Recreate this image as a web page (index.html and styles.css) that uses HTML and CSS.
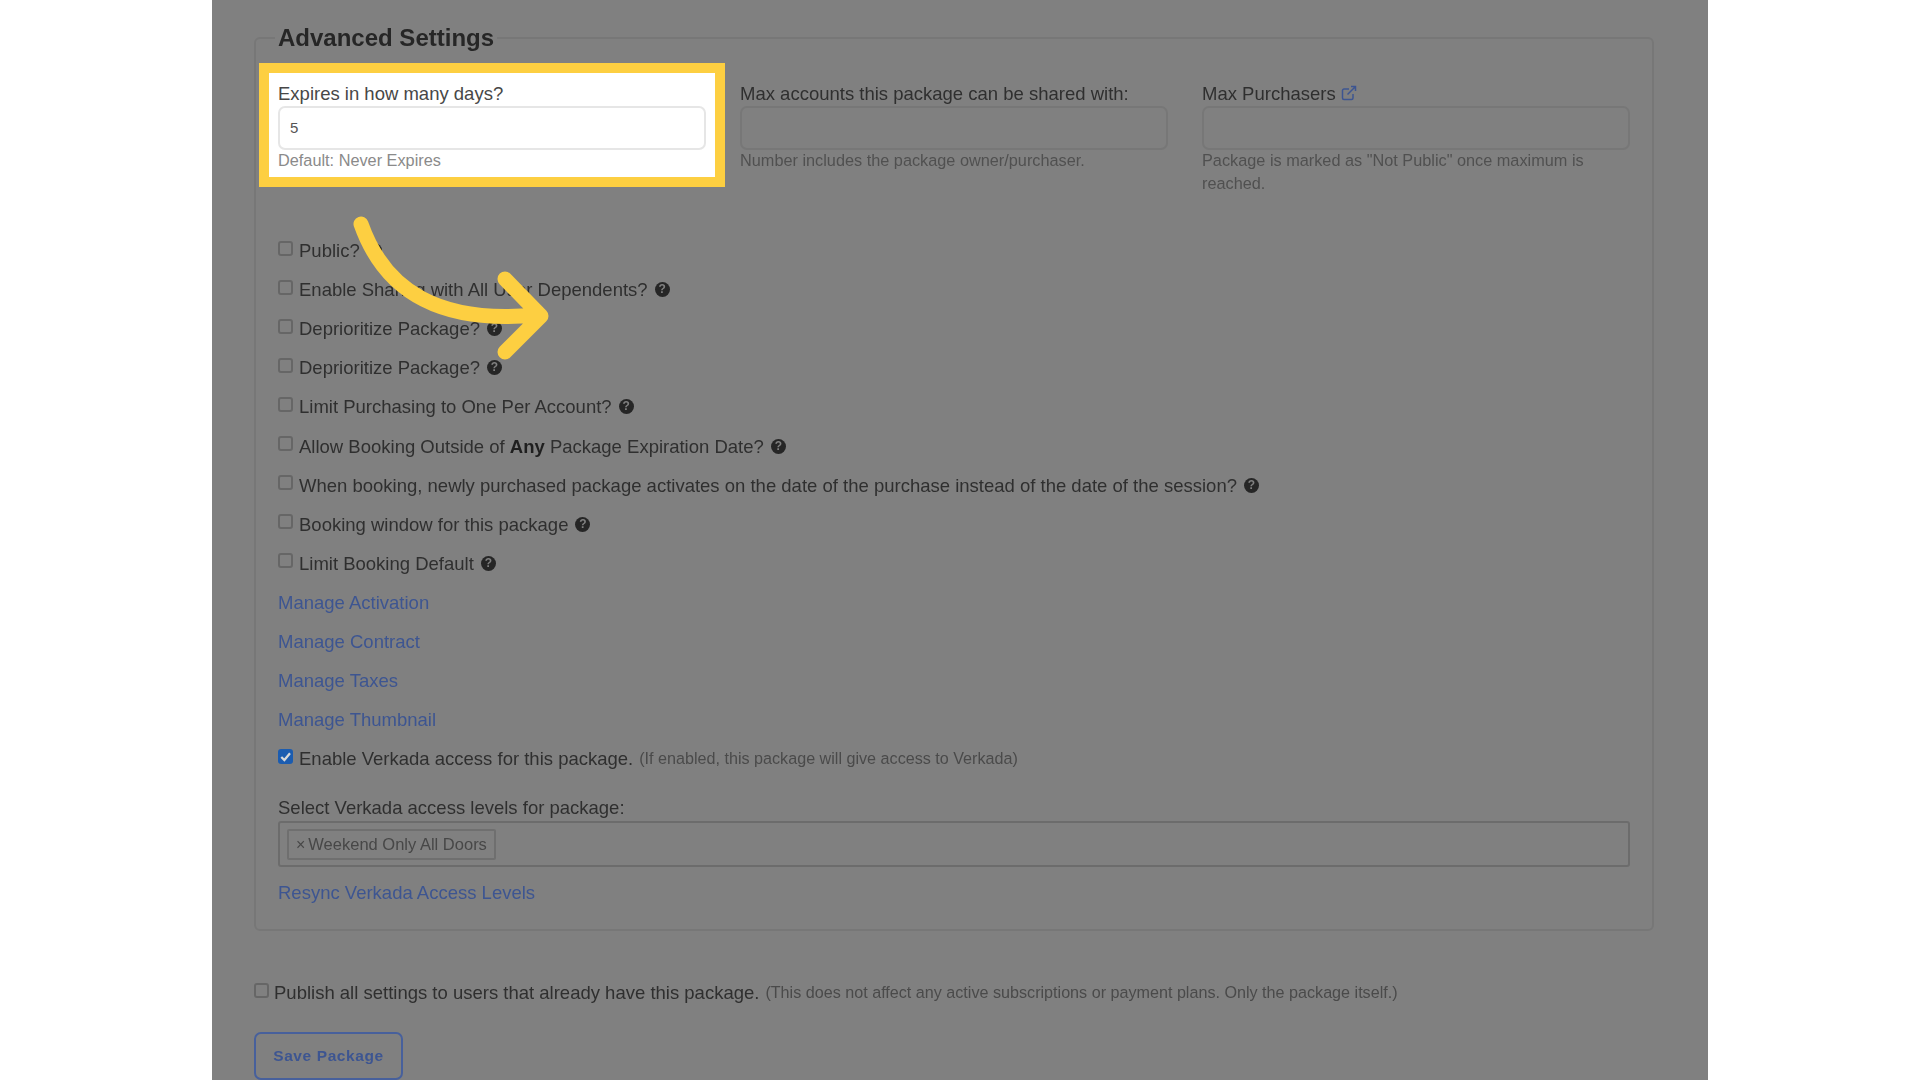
FILE: index.html
```html
<!DOCTYPE html>
<html lang="en">
<head>
<meta charset="utf-8">
<title>Advanced Settings</title>
<link rel="stylesheet" href="styles.css">
</head>
<body>
<main class="page">
  <div class="content">
    <fieldset class="panel">
      <legend class="panel-title">Advanced Settings</legend>
      <div class="fields">
        <div class="field field-highlight">
          <label class="label">Expires in how many days?</label>
          <div class="input input-on">5</div>
          <p class="help">Default: Never Expires</p>
        </div>
        <div class="field">
          <label class="label">Max accounts this package can be shared with:</label>
          <div class="input"></div>
          <p class="help">Number includes the package owner/purchaser.</p>
        </div>
        <div class="field">
          <label class="label">Max Purchasers
            <svg class="ext" viewBox="0 0 16 16" aria-hidden="true"><path d="M12 9v4a1.500 1.500 0 0 1-1.500 1.500H3A1.500 1.500 0 0 1 1.500 13V5.500A1.500 1.500 0 0 1 3 4h5M10 1.500h4.500V6M14.500 1.500 6.500 9.500"/></svg>
          </label>
          <div class="input"></div>
          <p class="help">Package is marked as "Not Public" once maximum is reached.</p>
        </div>
      </div>
      <ul class="rows">
        <li class="row"><span class="box"></span>Public?<span class="q">?</span></li>
        <li class="row"><span class="box"></span>Enable Sharing with All User Dependents?<span class="q">?</span></li>
        <li class="row"><span class="box"></span>Deprioritize Package?<span class="q">?</span></li>
        <li class="row"><span class="box"></span>Deprioritize Package?<span class="q">?</span></li>
        <li class="row"><span class="box"></span>Limit Purchasing to One Per Account?<span class="q">?</span></li>
        <li class="row"><span class="box"></span><span>Allow Booking Outside of <b class="strong">Any</b> Package Expiration Date?</span><span class="q">?</span></li>
        <li class="row"><span class="box"></span>When booking, newly purchased package activates on the date of the purchase instead of the date of the session?<span class="q">?</span></li>
        <li class="row"><span class="box"></span>Booking window for this package<span class="q">?</span></li>
        <li class="row"><span class="box"></span>Limit Booking Default<span class="q">?</span></li>
        <li class="row"><a class="link">Manage Activation</a></li>
        <li class="row"><a class="link">Manage Contract</a></li>
        <li class="row"><a class="link">Manage Taxes</a></li>
        <li class="row"><a class="link">Manage Thumbnail</a></li>
        <li class="row"><span class="box box-on"><svg viewBox="0 0 16 16" aria-hidden="true"><path d="M3.500 8.500 6.800 11.800 12.800 4.500"/></svg></span>Enable Verkada access for this package.<small class="note">(If enabled, this package will give access to Verkada)</small></li>
      </ul>
      <label class="label select-label">Select Verkada access levels for package:</label>
      <div class="select"><span class="tag"><span class="tag-x">×</span>Weekend Only All Doors</span></div>
      <a class="link resync">Resync Verkada Access Levels</a>
    </fieldset>
    <div class="row publish"><span class="box"></span>Publish all settings to users that already have this package.<small class="note">(This does not affect any active subscriptions or payment plans. Only the package itself.)</small></div>
    <button class="save" type="button">Save Package</button>
  </div>
  <svg class="arrow" viewBox="0 0 1920 1080" aria-hidden="true">
    <path d="M361 224C385 292 440 324 535 315M505 279 541 316 505 352"/>
  </svg>
</main>
</body>
</html>
```
FILE: styles.css
```css
* { box-sizing: border-box; }
html, body { margin: 0; height: 100%; background: #fff; }
body { overflow: hidden; font-family: "Liberation Sans", Arial, sans-serif; font-size: 18.500px; line-height: 23px; color: #2f2f2f; }
.page { width: 1496px; height: 1080px; margin-left: 212px; background: #808080; overflow: hidden; }
.content { padding: 23px 54px 0 42px; filter: blur(0.7px); }
.panel { margin: 0; padding: 28px 22px 25px 22px; border: 2px solid #777; border-radius: 6px; min-width: 0; }
.panel-title { padding: 0 3px; margin-left: -3px; font-size: 24px; line-height: 30px; font-weight: 700; color: #262626; }
.fields { display: grid; grid-template-columns: repeat(3, 1fr); column-gap: 34px; align-items: start; }
.field { min-width: 0; }
.field-highlight { position: relative; margin: -18px -19px -15px; padding: 8px 9px 5px; border: 10px solid #fdcf41; background: #fff; color: #474747; }
.label { display: block; padding-top: 1px; }
.input { height: 44px; margin-top: 1px; padding: 0 10px; border: 2px solid #777; border-radius: 7px; font-size: 15px; line-height: 40px; }
.input-on { border-color: #e6e6e6; background: #fff; color: #555; }
.help { margin: -1px 0 0; font-size: 16.300px; color: #505050; }
.field-highlight .help { color: #8a8a8a; }
.ext { width: 16px; height: 16px; margin-left: 0; vertical-align: -1px; fill: none; stroke: #3d5591; stroke-width: 1.500; }
.rows { margin: 36px 0 0; padding: 0; list-style: none; }
.row { display: flex; align-items: center; height: 39.100px; }
.box { flex: none; width: 15px; height: 15px; margin: -5px 6px 0 0; border: 2px solid #666; border-radius: 3px; background: #808080; }
.box-on { display: block; border: 0; background: #1b5cb0; }
.box-on svg { display: block; fill: none; stroke: #d8d8d8; stroke-width: 2.400; }
.q { display: inline-block; flex: none; width: 15px; height: 15px; margin-left: 7px; border-radius: 50%; background: #262626; color: #808080; font-size: 12px; font-weight: 700; line-height: 15px; text-align: center; }
.strong { color: #1f1f1f; }
.link { color: #3d5591; }
.note { margin-left: 6px; font-size: 16.150px; color: #4a4a4a; }
.select-label { margin-top: 17px; }
.select { display: flex; align-items: center; height: 46px; margin-top: 2px; padding-left: 7px; border: 2px solid #6c6c6c; border-radius: 3px; }
.tag { display: flex; align-items: center; height: 31px; padding: 0 7px; border: 2px solid #6f6f6f; border-radius: 2px; font-size: 16.500px; color: #474747; }
.tag-x { margin-right: 3px; font-size: 16px; }
.resync { display: block; margin-top: 14px; line-height: 23px; }
.publish { margin-top: 42px; }
.publish .box { margin-right: 5px; }
.save { display: block; width: 149px; height: 48px; margin-top: 20px; padding: 0; border: 2px solid #47609c; border-radius: 7px; background: transparent; color: #3d5591; font-family: inherit; font-size: 15.500px; font-weight: 700; letter-spacing: 0.6px; }
.arrow { position: absolute; left: 0; top: 0; width: 1920px; height: 1080px; fill: none; stroke: #fdcf41; stroke-width: 15; stroke-linecap: round; stroke-linejoin: round; }
```
